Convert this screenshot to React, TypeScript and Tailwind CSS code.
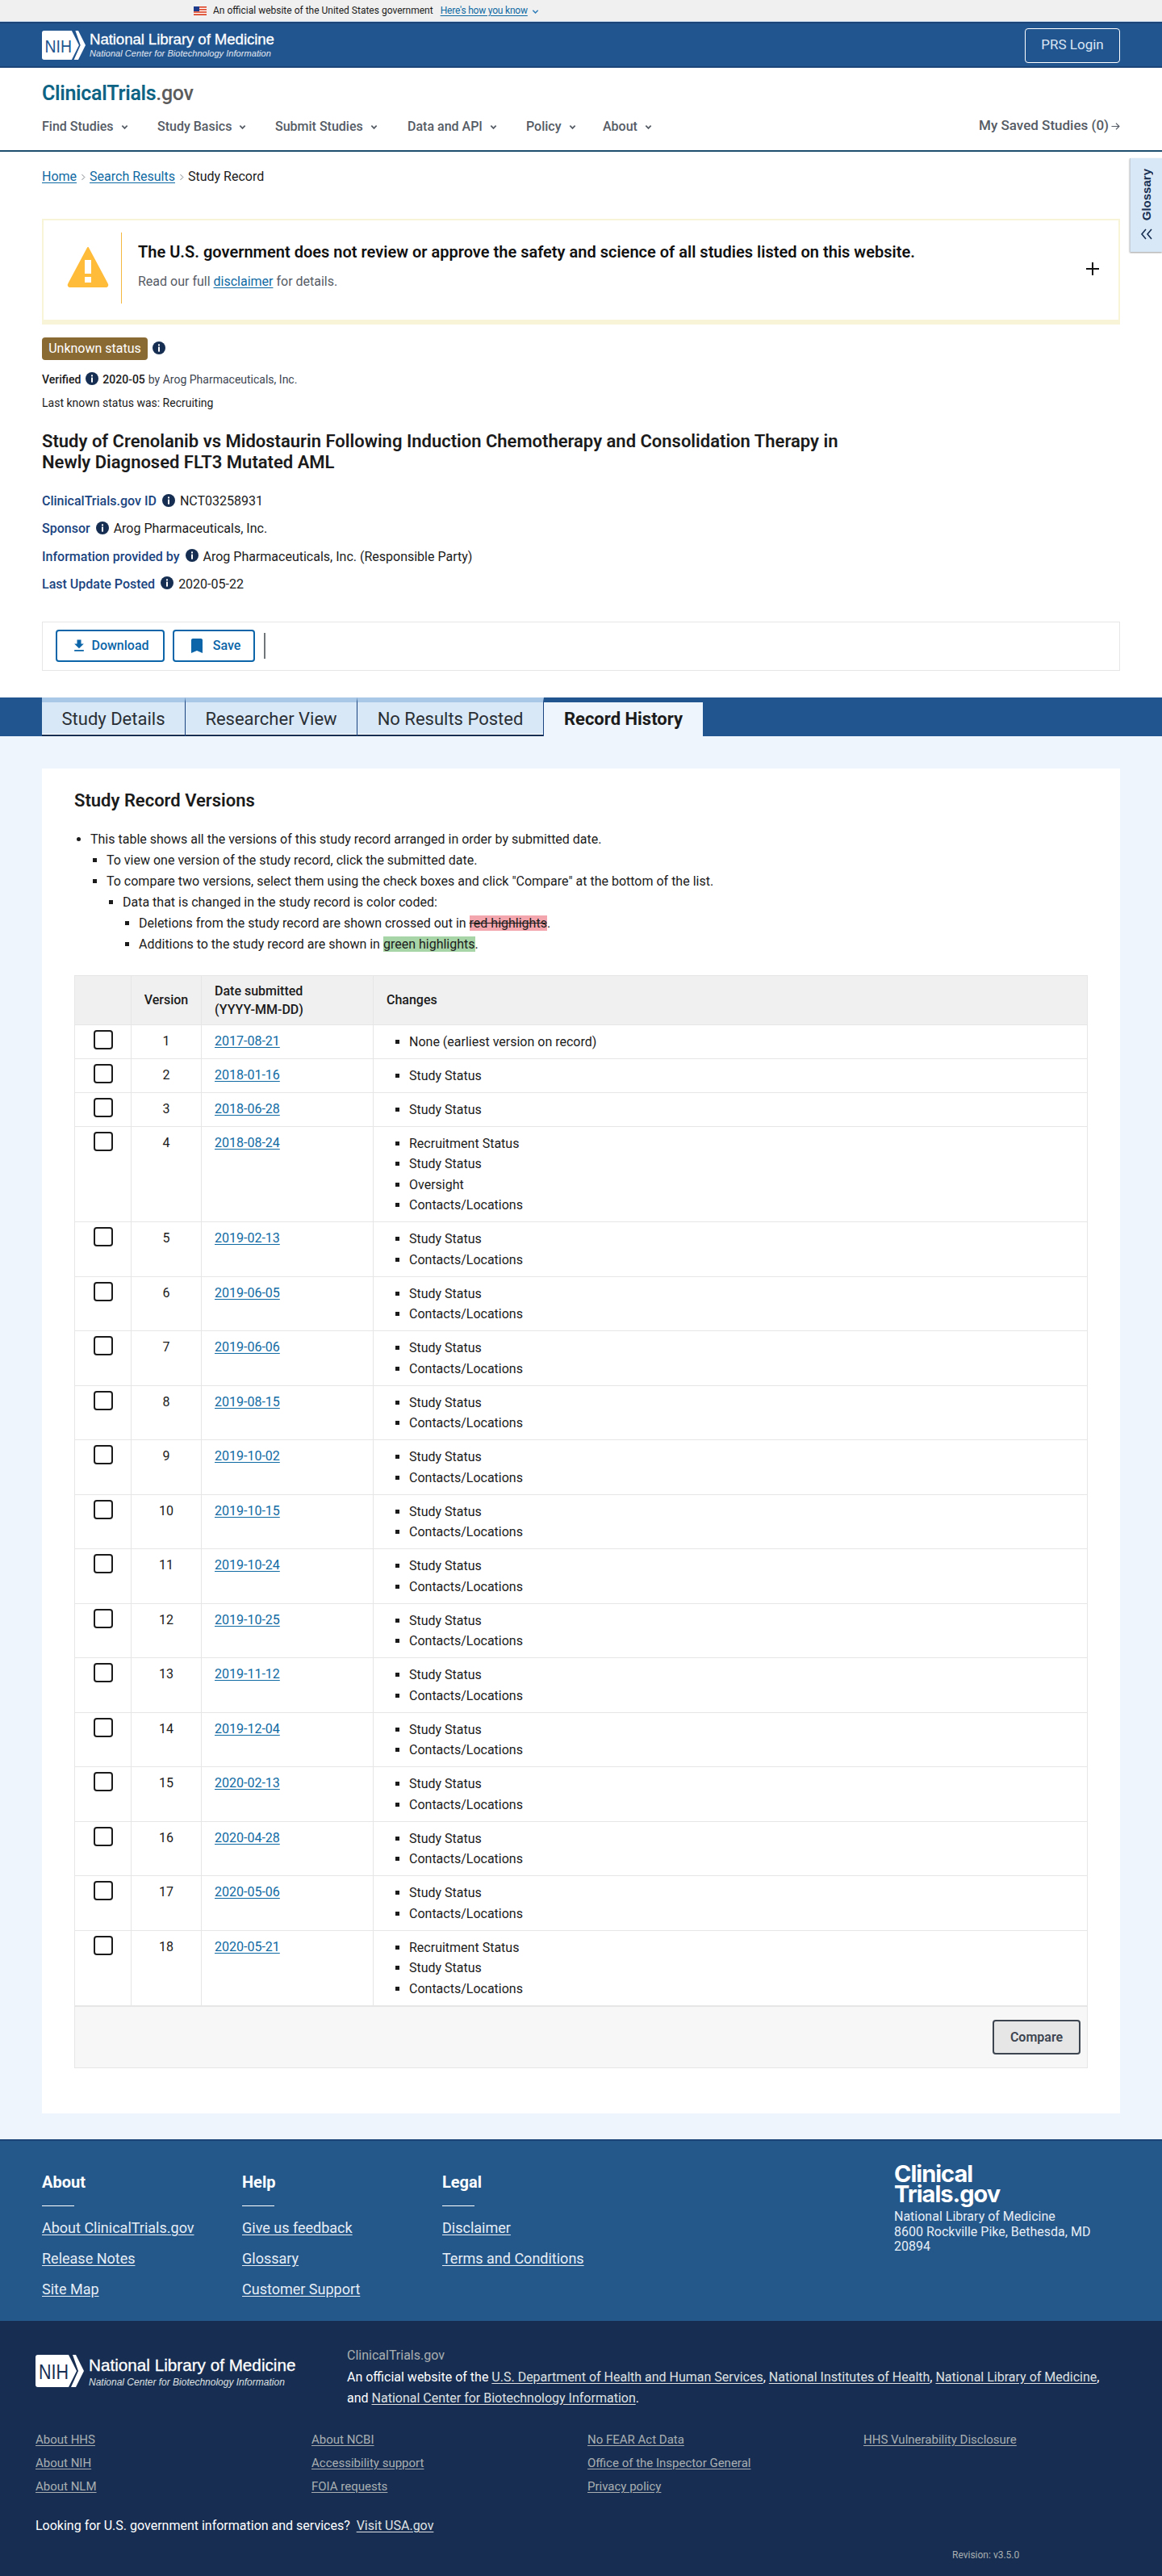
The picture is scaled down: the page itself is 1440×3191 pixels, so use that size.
import React from "react";

const Info = ({ cls = "" }: { cls?: string }) => (
  <svg viewBox="0 0 16 16" className={`inline-block w-4 h-4 shrink-0 ${cls}`}>
    <circle cx="8" cy="8" r="8" fill="#162e51" />
    <rect x="7" y="6.6" width="2" height="6" fill="#fff" />
    <rect x="7" y="3.4" width="2" height="2" fill="#fff" />
  </svg>
);

const NihLogo = ({ w, h, fill }: { w: number; h: number; fill: string }) => (
  <svg viewBox="0 0 60 40" width={w} height={h} className="shrink-0">
    <path d="M3 0H41L51 20L41 40H3a3 3 0 0 1-3-3V3a3 3 0 0 1 3-3z" fill="#fff" />
    <path d="M46 0H50L60 20L50 40H44L53 20z" fill="#fff" />
    <text x="4" y="29.5" fontSize="25" fontFamily="'Liberation Sans',sans-serif" fill={fill} textLength="37" lengthAdjust="spacingAndGlyphs">NIH</text>
  </svg>
);

const Chev = ({ c = "#565c65" }: { c?: string }) => (
  <svg viewBox="0 0 10 10" className="w-[9px] h-[9px] ml-[9px]">
    <path d="M1.5 3l3.5 3.6L8.5 3" fill="none" stroke={c} strokeWidth="1.9" />
  </svg>
);

const Crumb = () => (
  <svg viewBox="0 0 8 12" className="w-[6px] h-[11px] mx-[5px]">
    <path d="M2 1.5L6.5 6L2 10.5" fill="none" stroke="#71767a" strokeWidth="1.2" />
  </svg>
);

const versions: [string, string[]][] = [
  ["2017-08-21", ["None (earliest version on record)"]],
  ["2018-01-16", ["Study Status"]],
  ["2018-06-28", ["Study Status"]],
  ["2018-08-24", ["Recruitment Status", "Study Status", "Oversight", "Contacts/Locations"]],
  ["2019-02-13", ["Study Status", "Contacts/Locations"]],
  ["2019-06-05", ["Study Status", "Contacts/Locations"]],
  ["2019-06-06", ["Study Status", "Contacts/Locations"]],
  ["2019-08-15", ["Study Status", "Contacts/Locations"]],
  ["2019-10-02", ["Study Status", "Contacts/Locations"]],
  ["2019-10-15", ["Study Status", "Contacts/Locations"]],
  ["2019-10-24", ["Study Status", "Contacts/Locations"]],
  ["2019-10-25", ["Study Status", "Contacts/Locations"]],
  ["2019-11-12", ["Study Status", "Contacts/Locations"]],
  ["2019-12-04", ["Study Status", "Contacts/Locations"]],
  ["2020-02-13", ["Study Status", "Contacts/Locations"]],
  ["2020-04-28", ["Study Status", "Contacts/Locations"]],
  ["2020-05-06", ["Study Status", "Contacts/Locations"]],
  ["2020-05-21", ["Recruitment Status", "Study Status", "Contacts/Locations"]],
];

const Meta = ({ label, value }: { label: string; value: string }) => (
  <div className="flex items-center h-6 text-base">
    <span className="font-medium text-[#1a4480]">{label}</span>
    <Info cls="ml-[7px] mr-[6px] -mt-[3px]" />
    <span className="text-[#1b1b1b]">{value}</span>
  </div>
);

const navItems: [string, string][] = [
  ["Find Studies", "w-[143px]"],
  ["Study Basics", "w-[146px]"],
  ["Submit Studies", "w-[164px]"],
  ["Data and API", "w-[147px]"],
  ["Policy", "w-[95px]"],
  ["About", "w-[80px]"],
];

const tabs: [string, string][] = [
  ["Study Details", "w-[178px]"],
  ["Researcher View", "w-[213px]"],
  ["No Results Posted", "w-[231px]"],
];

const FootCol = ({ title, links, cls }: { title: string; links: string[]; cls: string }) => (
  <div className={cls}>
    <h3 className="text-xl font-bold text-white leading-6">{title}</h3>
    <div className="w-10 h-px bg-white mt-[17px]" />
    <ul className="mt-[13px] flex flex-col gap-[9px]">
      {links.map((l) => (
        <li key={l} className="leading-7">
          <a className="text-lg text-[#e7eef6] underline underline-offset-2">{l}</a>
        </li>
      ))}
    </ul>
  </div>
);

const BottomCol = ({ links, cls }: { links: string[]; cls: string }) => (
  <ul className={`flex flex-col gap-[9px] ${cls}`}>
    {links.map((l) => (
      <li key={l} className="leading-5">
        <a className="text-[15px] text-[#a9aeb1] underline underline-offset-2">{l}</a>
      </li>
    ))}
  </ul>
);

const Lnk = ({ children }: { children: React.ReactNode }) => (
  <a className="text-[#dfe1e2] underline underline-offset-2">{children}</a>
);

export default function App() {
  return (
    <div className="font-['Roboto',sans-serif] text-[#1b1b1b] bg-white relative w-[1440px]">
      {/* gov banner */}
      <div className="h-[27px] bg-[#f0f0f0] flex items-center pl-[240px] text-xs border-b border-[#cfe0f0]">
        <svg viewBox="0 0 16 11" className="w-4 h-[11px] mr-2 mt-[1px]">
          <rect width="16" height="11" fill="#db3e1f" />
          <rect y="1.6" width="16" height="1.5" fill="#fff" />
          <rect y="4.7" width="16" height="1.5" fill="#fff" />
          <rect y="7.8" width="16" height="1.5" fill="#fff" />
          <rect width="7" height="6" fill="#1e3a8a" />
        </svg>
        <span>An official website of the United States government</span>
        <a className="ml-[9px] text-[#0f6aa3] underline underline-offset-2 tracking-[-0.2px]">Here's how you know</a>
        <svg viewBox="0 0 10 10" className="w-[9px] h-[9px] ml-[5px] mt-[2px]">
          <path d="M1.5 3l3.5 3.6L8.5 3" fill="none" stroke="#2a7ab8" strokeWidth="1.6" />
        </svg>
      </div>

      {/* NLM header */}
      <header className="h-[57px] bg-[#215590] border-y-2 border-[#1b4478] flex items-center justify-between px-[52px]">
        <div className="flex items-center">
          <NihLogo w={54} h={36} fill="#215590" />
          <div className="ml-[5px] font-['Liberation_Sans',sans-serif] text-white">
            <div className="text-[18.7px] leading-[22px] font-normal [-webkit-text-stroke:0.3px_#fff] tracking-[-0.1px]">National Library of Medicine</div>
            <div className="text-[11px] leading-[13px] italic text-[#e3e9f2] tracking-[0.05px]">National Center for Biotechnology Information</div>
          </div>
        </div>
        <button className="w-[118px] h-[43px] border border-white rounded text-[17px] text-[#dbe6f3] mt-[1px]">PRS Login</button>
      </header>

      {/* site nav */}
      <div className="h-[104px] border-b-2 border-[#1d4e6e] px-[52px] relative">
        <div className="pt-[17px] text-[25px] leading-[30px] font-semibold tracking-[-0.3px]">
          <span className="text-[#0e6485]">ClinicalTrials</span>
          <span className="text-[#5c5c5c] font-medium">.gov</span>
        </div>
        <nav className="mt-[14px] flex items-center h-6 text-base font-medium text-[#565c65]">
          {navItems.map(([n, w]) => (
            <div key={n} className={`flex items-center ${w}`}>
              {n}
              <Chev />
            </div>
          ))}
          <div className="ml-auto flex items-center -mt-[2px] text-[17px]">
            My Saved Studies (0)
            <svg viewBox="0 0 12 12" className="w-[11px] h-[11px] ml-[3px]">
              <path d="M0.5 6H10.5M6.5 1.8L10.8 6L6.5 10.2" fill="none" stroke="#565c65" strokeWidth="1.3" />
            </svg>
          </div>
        </nav>
      </div>

      {/* glossary tab */}
      <div className="absolute right-0 top-[196px] w-10 h-[116px] bg-[#d9e8f6] border-l border-[#c5cdd6] shadow-[0_1px_2px_rgba(0,0,0,.4)] flex flex-col items-center pt-[13px]">
        <span className="font-['Liberation_Sans',sans-serif] font-bold text-[15px] leading-5 text-[#162e51] [writing-mode:vertical-rl] rotate-180">Glossary</span>
        <svg viewBox="0 0 16 14" className="w-4 h-[14px] mt-[10px]">
          <path d="M7 1L2 7l5 6M14 1L9 7l5 6" fill="none" stroke="#162e51" strokeWidth="1.6" />
        </svg>
      </div>

      {/* top content */}
      <div className="px-[52px]">
        <div className="pt-5 h-[42px] flex items-center text-base leading-6">
          <a className="text-[#0f6aa3] underline underline-offset-2">Home</a>
          <Crumb />
          <a className="text-[#0f6aa3] underline underline-offset-2">Search Results</a>
          <Crumb />
          <span>Study Record</span>
        </div>

        <div className="mt-[41px] h-[131px] border-2 border-b-[6px] border-[#f8f4d8] flex items-center relative">
          <svg viewBox="0 0 52 52" className="w-[52px] h-[52px] ml-[29px] -mt-[7px]">
            <path d="M26 2L50 47a2 2 0 0 1-2 3H4a2 2 0 0 1-2-3z" fill="#ffbc3a" stroke="#ffbc3a" strokeWidth="2" strokeLinejoin="round" />
            <rect x="22" y="17" width="8" height="17" fill="#fff" />
            <rect x="22" y="38" width="8" height="7" fill="#fff" />
          </svg>
          <div className="w-px h-[88px] bg-[#f4b740] ml-[15px] -mt-[5px]" />
          <div className="ml-5 -mt-[11px]">
            <div className="text-[20px] leading-7 font-semibold text-[#111] tracking-[0.01px]">The U.S. government does not review or approve the safety and science of all studies listed on this website.</div>
            <div className="mt-[11px] text-base leading-6 text-[#565c65]">
              Read our full <a className="text-[#0f6aa3] underline underline-offset-2">disclaimer</a> for details.
            </div>
          </div>
          <svg viewBox="0 0 16 16" className="absolute right-[24px] top-[52px] w-4 h-4">
            <path d="M8 0v16M0 8h16" stroke="#111" strokeWidth="2" />
          </svg>
        </div>

        <div className="mt-4 flex items-center h-7">
          <span className="h-7 w-[131px] rounded-sm bg-[#8a6a33] text-white text-base flex items-center justify-center">Unknown status</span>
          <Info cls="ml-[6px] -mt-[2px]" />
        </div>
        <div className="mt-[14px] h-5 flex items-center text-sm">
          <span className="font-medium">Verified</span>
          <Info cls="ml-[6px] mr-[5px] -mt-[3px]" />
          <span className="font-medium">2020-05</span>
          <span className="ml-1 text-[#3d4551]">by Arog Pharmaceuticals, Inc.</span>
        </div>
        <div className="mt-[9px] h-5 leading-5 text-sm">Last known status was: Recruiting</div>

        <h1 className="mt-[25px] text-[22px] leading-[26px] font-semibold text-[#1b1b1b] w-[1010px]">
          Study of Crenolanib vs Midostaurin Following Induction Chemotherapy and Consolidation Therapy in Newly Diagnosed FLT3 Mutated AML
        </h1>

        <div className="mt-[23px] flex flex-col gap-[10.3px]">
          <Meta label="ClinicalTrials.gov ID" value="NCT03258931" />
          <Meta label="Sponsor" value="Arog Pharmaceuticals, Inc." />
          <Meta label="Information provided by" value="Arog Pharmaceuticals, Inc. (Responsible Party)" />
          <Meta label="Last Update Posted" value="2020-05-22" />
        </div>

        <div className="mt-[34px] h-[61px] border border-[#e6e6e6] flex items-center pl-4">
          <button className="w-[135px] h-10 border-2 border-[#0b65a8] rounded flex items-center justify-center text-[#0b65a8] font-medium text-base gap-[5px]">
            <svg viewBox="0 0 24 24" className="w-5 h-5" fill="#0b65a8"><path d="M5 20h14v-2H5v2zM19 9h-4V3H9v6H5l7 7 7-7z" /></svg>
            Download
          </button>
          <button className="ml-[10px] w-[102px] h-10 border-2 border-[#0b65a8] rounded flex items-center justify-center text-[#0b65a8] font-medium text-base gap-[8px]">
            <svg viewBox="0 0 24 24" className="w-6 h-6" fill="#0b65a8"><path d="M17 3H7c-1.1 0-2 .9-2 2v16l7-3 7 3V5c0-1.1-.9-2-2-2z" /></svg>
            Save
          </button>
          <div className="ml-[11px] w-[2px] h-8 bg-[#71767a]" />
        </div>
      </div>

      {/* tabs */}
      <div className="mt-[33px] h-12 bg-[#215590] pl-[52px] flex">
        {tabs.map(([t, w]) => (
          <div key={t} className={`${w} bg-[#d9e8f6] border-t-[6px] border-t-[#a9c8e8] border-r border-r-[#1a4480] shadow-[inset_0_-2px_0_#162e51,inset_0_-3px_0_#fff] flex items-center justify-center text-[22px] text-[#2a2f35]`}>
            {t}
          </div>
        ))}
        <div className="w-[197px] bg-[#eef5fc] border-t-[6px] border-t-[#215590] flex items-center justify-center text-[22px] font-bold text-[#1b1b1b]">Record History</div>
      </div>

      {/* record versions */}
      <main className="bg-[#eef5fc] px-[52px] pt-10 pb-8">
        <section className="bg-white px-10 pt-[26px] pb-14">
          <h2 className="text-[22px] leading-7 font-semibold text-[#1b1b1b]">Study Record Versions</h2>
          <ul className="mt-[21px] list-disc pl-5 text-base leading-[26px] text-[#1b1b1b]">
            <li>
              This table shows all the versions of this study record arranged in order by submitted date.
              <ul className="list-[square] pl-5">
                <li>To view one version of the study record, click the submitted date.</li>
                <li>
                  To compare two versions, select them using the check boxes and click "Compare" at the bottom of the list.
                  <ul className="list-[square] pl-5">
                    <li>
                      Data that is changed in the study record is color coded:
                      <ul className="list-[square] pl-5">
                        <li>Deletions from the study record are shown crossed out in <span className="bg-[#f4a6ae] line-through">red highlights</span>.</li>
                        <li>Additions to the study record are shown in <span className="bg-[#a8d5a8]">green highlights</span>.</li>
                      </ul>
                    </li>
                  </ul>
                </li>
              </ul>
            </li>
          </ul>

          <table className="mt-[25px] w-[1256px] table-fixed border-collapse text-base">
            <colgroup>
              <col className="w-[70px]" />
              <col className="w-[87px]" />
              <col className="w-[213px]" />
              <col />
            </colgroup>
            <thead>
              <tr className="bg-[#f0f0f0] h-[61px] font-medium">
                <th className="border border-[#e6e6e6]" />
                <th className="border border-[#e6e6e6] font-medium">Version</th>
                <th className="border border-[#e6e6e6] font-medium text-left px-4 leading-[23px]">Date submitted<br />(YYYY-MM-DD)</th>
                <th className="border border-[#e6e6e6] font-medium text-left px-4">Changes</th>
              </tr>
            </thead>
            <tbody>
              {versions.map(([d, items], i) => (
                <tr key={d}>
                  <td className="border border-[#e6e6e6] align-top pt-[6px]">
                    <div className="w-6 h-6 mx-auto border-2 border-[#1b1b1b] rounded" />
                  </td>
                  <td className="border border-[#e6e6e6] align-top text-center pt-[8px] leading-6">{i + 1}</td>
                  <td className="border border-[#e6e6e6] align-top px-4 pt-[8px] leading-6">
                    <a className="text-[#0f6aa3] underline underline-offset-2">{d}</a>
                  </td>
                  <td className="border border-[#e6e6e6] align-top pl-4 pt-2 pb-[7.5px]">
                    <ul className="list-[square] pl-7 leading-[25.5px] text-[#1b1b1b]">
                      {items.map((t) => (
                        <li key={t}>{t}</li>
                      ))}
                    </ul>
                  </td>
                </tr>
              ))}
              <tr className="bg-[#f7f7f7]">
                <td colSpan={4} className="border border-[#e6e6e6] border-t-2 h-[77px] text-right pr-2">
                  <button className="w-[109px] h-[43px] bg-[#e6e6e6] border-2 border-[#3d4551] rounded text-base font-semibold text-[#3d4551]">Compare</button>
                </td>
              </tr>
            </tbody>
          </table>
        </section>
      </main>

      {/* footer */}
      <footer className="h-[225px] bg-[#24578a] border-t-2 border-[#1b4478] px-[52px] pt-[39px] flex">
        <FootCol cls="w-[248px]" title="About" links={["About ClinicalTrials.gov", "Release Notes", "Site Map"]} />
        <FootCol cls="w-[248px]" title="Help" links={["Give us feedback", "Glossary", "Customer Support"]} />
        <FootCol cls="w-[560px]" title="Legal" links={["Disclaimer", "Terms and Conditions"]} />
        <div className="-mt-[11px] text-white">
          <div className="font-['Inter',sans-serif] text-[29px] leading-[25px] font-bold tracking-[-1px]">Clinical<br />Trials.gov</div>
          <div className="mt-[7px] text-base leading-[18.5px] text-[#e7eef6]">National Library of Medicine<br />8600 Rockville Pike, Bethesda, MD<br />20894</div>
        </div>
      </footer>

      <div className="h-[316px] bg-[#172e52] px-[44px] pt-[33px] relative">
        <div className="flex">
          <div className="flex items-start w-[386px] pt-[9px]">
            <NihLogo w={60} h={40} fill="#172e52" />
            <div className="ml-[6px] font-['Liberation_Sans',sans-serif] text-white">
              <div className="text-[20.7px] leading-[24px] mt-[1px] [-webkit-text-stroke:0.3px_#fff]">National Library of Medicine</div>
              <div className="text-[12px] leading-[14px] italic text-[#dfe1e2] mt-[2px]">National Center for Biotechnology Information</div>
            </div>
          </div>
          <div className="text-base leading-[26px] text-white w-[940px]">
            <div className="text-[#a9aeb1] leading-5">ClinicalTrials.gov</div>
            <div className="mt-[4px]">
              An official website of the <Lnk>U.S. Department of Health and Human Services</Lnk>, <Lnk>National Institutes of Health</Lnk>, <Lnk>National Library of Medicine</Lnk>, and <Lnk>National Center for Biotechnology Information</Lnk>.
            </div>
          </div>
        </div>
        <div className="flex mt-[28px]">
          <BottomCol cls="w-[342px]" links={["About HHS", "About NIH", "About NLM"]} />
          <BottomCol cls="w-[342px]" links={["About NCBI", "Accessibility support", "FOIA requests"]} />
          <BottomCol cls="w-[342px]" links={["No FEAR Act Data", "Office of the Inspector General", "Privacy policy"]} />
          <BottomCol cls="w-[300px]" links={["HHS Vulnerability Disclosure"]} />
        </div>
        <div className="mt-[27px] text-base leading-6 text-white">
          Looking for U.S. government information and services?&nbsp; <Lnk>Visit USA.gov</Lnk>
        </div>
        <div className="absolute left-[1180px] top-[282px] text-xs text-[#a9aeb1]">Revision: v3.5.0</div>
      </div>
    </div>
  );
}
